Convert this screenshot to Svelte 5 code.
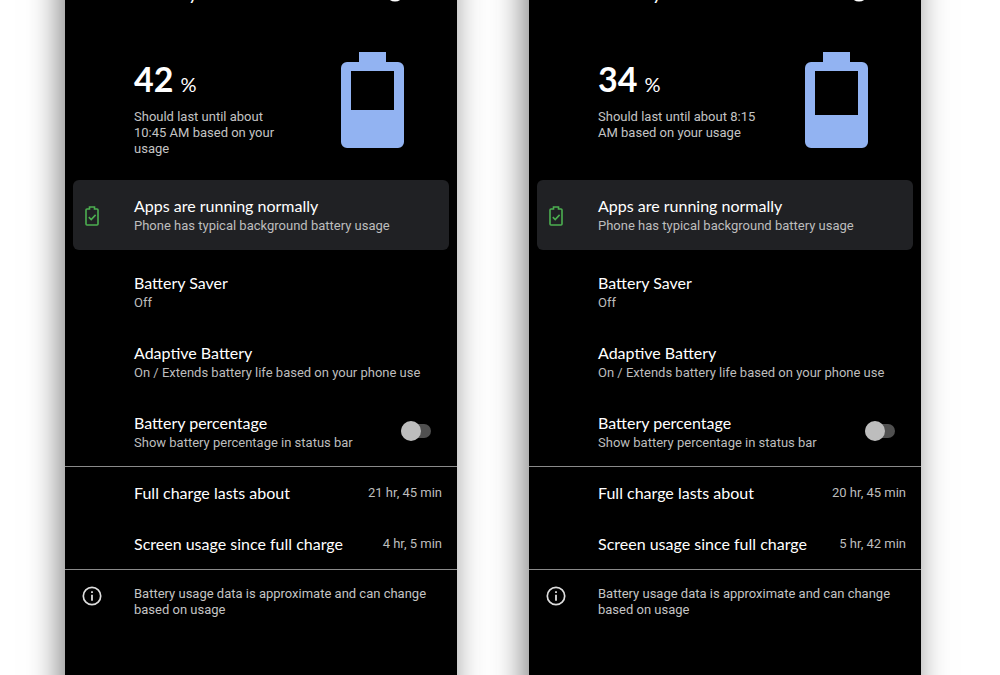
<script lang="ts">
  /**
   * Two battery settings screens shown side by side.
   */

  interface BatteryScreen {
    /** Prefix for element ids. */
    id: string;
    /** Charge level in percent. */
    level: number;
    /** Remaining time estimate. */
    estimate: string;
    /** Predicted runtime on a full charge. */
    fullCharge: string;
    /** Screen-on time since the last full charge. */
    screenUsage: string;
    /** Whether the status bar shows the percentage. */
    showPercentage: boolean;
  }

  let screens: BatteryScreen[] = $state([
    {
      id: 'first',
      level: 42,
      estimate: 'Should last until about 10:45 AM based on your usage',
      fullCharge: '21 hr, 45 min',
      screenUsage: '4 hr, 5 min',
      showPercentage: false,
    },
    {
      id: 'second',
      level: 34,
      estimate: 'Should last until about 8:15 AM based on your usage',
      fullCharge: '20 hr, 45 min',
      screenUsage: '5 hr, 42 min',
      showPercentage: false,
    },
  ]);

  // The meter cavity runs from y=19 to y=86
  function emptyHeight(level: number): number {
    return Math.round(67 * (1 - level / 100));
  }
</script>

<main class="screens">
  {#each screens as screen (screen.id)}
    <section class="phone">
      <header class="app-bar">
        <h1>Battery</h1>
        <button class="help" aria-label="Help">
          <svg width="20" height="20" viewBox="0 0 20 20" fill="none" stroke="#fff" stroke-width="2">
            <circle cx="10" cy="10" r="8.5" />
            <path d="M7.5 8a2.5 2.5 0 1 1 3.6 2.2c-.8.5-1.1.9-1.1 1.8M10 13.5v1.5" />
          </svg>
        </button>
      </header>

      <div class="hero">
        <div class="summary">
          <p class="level">{screen.level}<span>%</span></p>
          <p class="estimate">{screen.estimate}</p>
        </div>
        <svg class="meter" width="63" height="96" viewBox="0 0 63 96">
          <path
            d="M18 0h27v10h12a6 6 0 0 1 6 6v74a6 6 0 0 1-6 6H6a6 6 0 0 1-6-6V16a6 6 0 0 1 6-6h12z"
            fill="#92b3f2"
          />
          <rect x="10" y="19" width="43" height={emptyHeight(screen.level)} fill="#000" />
        </svg>
      </div>

      <button class="status tip">
        <svg width="14" height="20" viewBox="0 0 14 20" fill="none" stroke="#4caf50" stroke-width="1.6">
          <path d="M4.5 3V1h5v2H12a1 1 0 0 1 1 1v14a1 1 0 0 1-1 1H2a1 1 0 0 1-1-1V4a1 1 0 0 1 1-1z" />
          <path d="M3.8 11.2l2.4 2.3 4.4-4.6" />
        </svg>
        <span class="label">
          <span class="title">Apps are running normally</span>
          <span class="note">Phone has typical background battery usage</span>
        </span>
      </button>

      <div class="options">
        <button class="label">
          <span class="title">Battery Saver</span>
          <span class="note">Off</span>
        </button>
        <button class="label">
          <span class="title">Adaptive Battery</span>
          <span class="note">On / Extends battery life based on your phone use</span>
        </button>
        <div class="option">
          <label class="label" for="{screen.id}-percentage">
            <span class="title">Battery percentage</span>
            <span class="note">Show battery percentage in status bar</span>
          </label>
          <input
            id="{screen.id}-percentage"
            class="toggle"
            type="checkbox"
            role="switch"
            bind:checked={screen.showPercentage}
          />
        </div>
      </div>

      <dl class="stats">
        <div>
          <dt class="title">Full charge lasts about</dt>
          <dd class="note">{screen.fullCharge}</dd>
        </div>
        <div>
          <dt class="title">Screen usage since full charge</dt>
          <dd class="note">{screen.screenUsage}</dd>
        </div>
      </dl>

      <footer class="info tip">
        <svg width="20" height="20" viewBox="0 0 20 20">
          <circle cx="10" cy="10" r="8.7" fill="none" stroke="#ddd" stroke-width="1.7" />
          <path d="M9.1 5.2h1.8v1.8H9.1zM9.1 8.8h1.8v6H9.1z" fill="#ddd" />
        </svg>
        <p>Battery usage data is approximate and can change based on usage</p>
      </footer>
    </section>
  {/each}
</main>

<style>
  :global(body) {
    margin: 0;
    background: #fff;
  }

  .screens {
    display: grid;
    grid-template-columns: 1fr 1fr;
    gap: 72px;
    min-height: 100vh;
    padding: 0 79px 0 65px;
    box-sizing: border-box;
    overflow: hidden;
    font-family: Roboto, "Liberation Sans", sans-serif;
  }

  /* Runs past the top and bottom edges so the shadow stays even */
  .phone {
    display: flex;
    flex-direction: column;
    margin: -40px 0;
    padding: 40px 0;
    background: #000;
    color: #fff;
    box-shadow: -5px 0 30px rgba(0, 0, 0, 0.5);
  }

  h1,
  p,
  dl,
  dd {
    margin: 0;
  }

  button {
    padding: 0;
    border: 0;
    background: none;
    color: inherit;
    font: inherit;
    text-align: left;
    cursor: pointer;
  }

  svg {
    display: block;
  }

  /* The app bar is scrolled almost out of view */
  .app-bar {
    display: flex;
    align-items: center;
    justify-content: space-between;
    height: 56px;
    margin-top: -36px;
    padding: 0 52px 0 69px;
  }

  h1 {
    font-family: Lato, sans-serif;
    font-size: 20px;
    font-weight: 400;
  }

  .hero {
    display: flex;
    justify-content: space-between;
    gap: 45px;
    min-height: 128px;
    padding: 32px 53px 0 69px;
  }

  .summary {
    flex: 1;
  }

  .meter {
    flex: none;
  }

  .level {
    font-family: Lato, sans-serif;
    font-size: 34px;
    font-weight: 700;
    line-height: 54px;
  }

  .level span {
    margin-left: 7px;
    font-size: 20px;
    font-weight: 400;
    line-height: 20px;
  }

  .estimate,
  .info p {
    color: #c4c4c4;
    font-size: 13px;
    line-height: 16px;
  }

  .estimate {
    margin-top: 3px;
  }

  .tip {
    display: grid;
    grid-template-columns: 38px 1fr;
    column-gap: 23px;
    justify-items: start;
  }

  .tip svg {
    justify-self: center;
  }

  .status {
    align-items: center;
    margin: 0 8px;
    padding: 16px 0 14px;
    border-radius: 6px;
    background: #202124;
  }

  .label {
    display: flex;
    flex-direction: column;
  }

  .title {
    font-family: Lato, sans-serif;
    font-size: 16px;
    line-height: 20px;
  }

  .note {
    color: #bdbdbd;
    font-size: 13px;
    line-height: 20px;
  }

  .options {
    display: flex;
    flex-direction: column;
    gap: 30px;
    padding: 23px 26px 13px 69px;
    border-bottom: 1px solid #8a8a8a;
  }

  .option {
    display: flex;
    align-items: center;
    justify-content: space-between;
  }

  .toggle {
    position: relative;
    width: 30px;
    height: 14px;
    margin: 0 0 4px;
    border-radius: 7px;
    background: #505050;
    appearance: none;
    cursor: pointer;
  }

  .toggle::before {
    content: "";
    position: absolute;
    top: -3px;
    left: 0;
    width: 20px;
    height: 20px;
    border-radius: 50%;
    background: #bdbdbd;
  }

  .toggle:checked::before {
    left: auto;
    right: 0;
    background: #92b3f2;
  }

  .stats {
    border-bottom: 1px solid #8a8a8a;
  }

  .stats div {
    display: flex;
    align-items: center;
    justify-content: space-between;
    height: 51px;
    padding: 0 15px 0 69px;
  }

  .info {
    padding: 16px 15px 24px 8px;
  }
</style>
